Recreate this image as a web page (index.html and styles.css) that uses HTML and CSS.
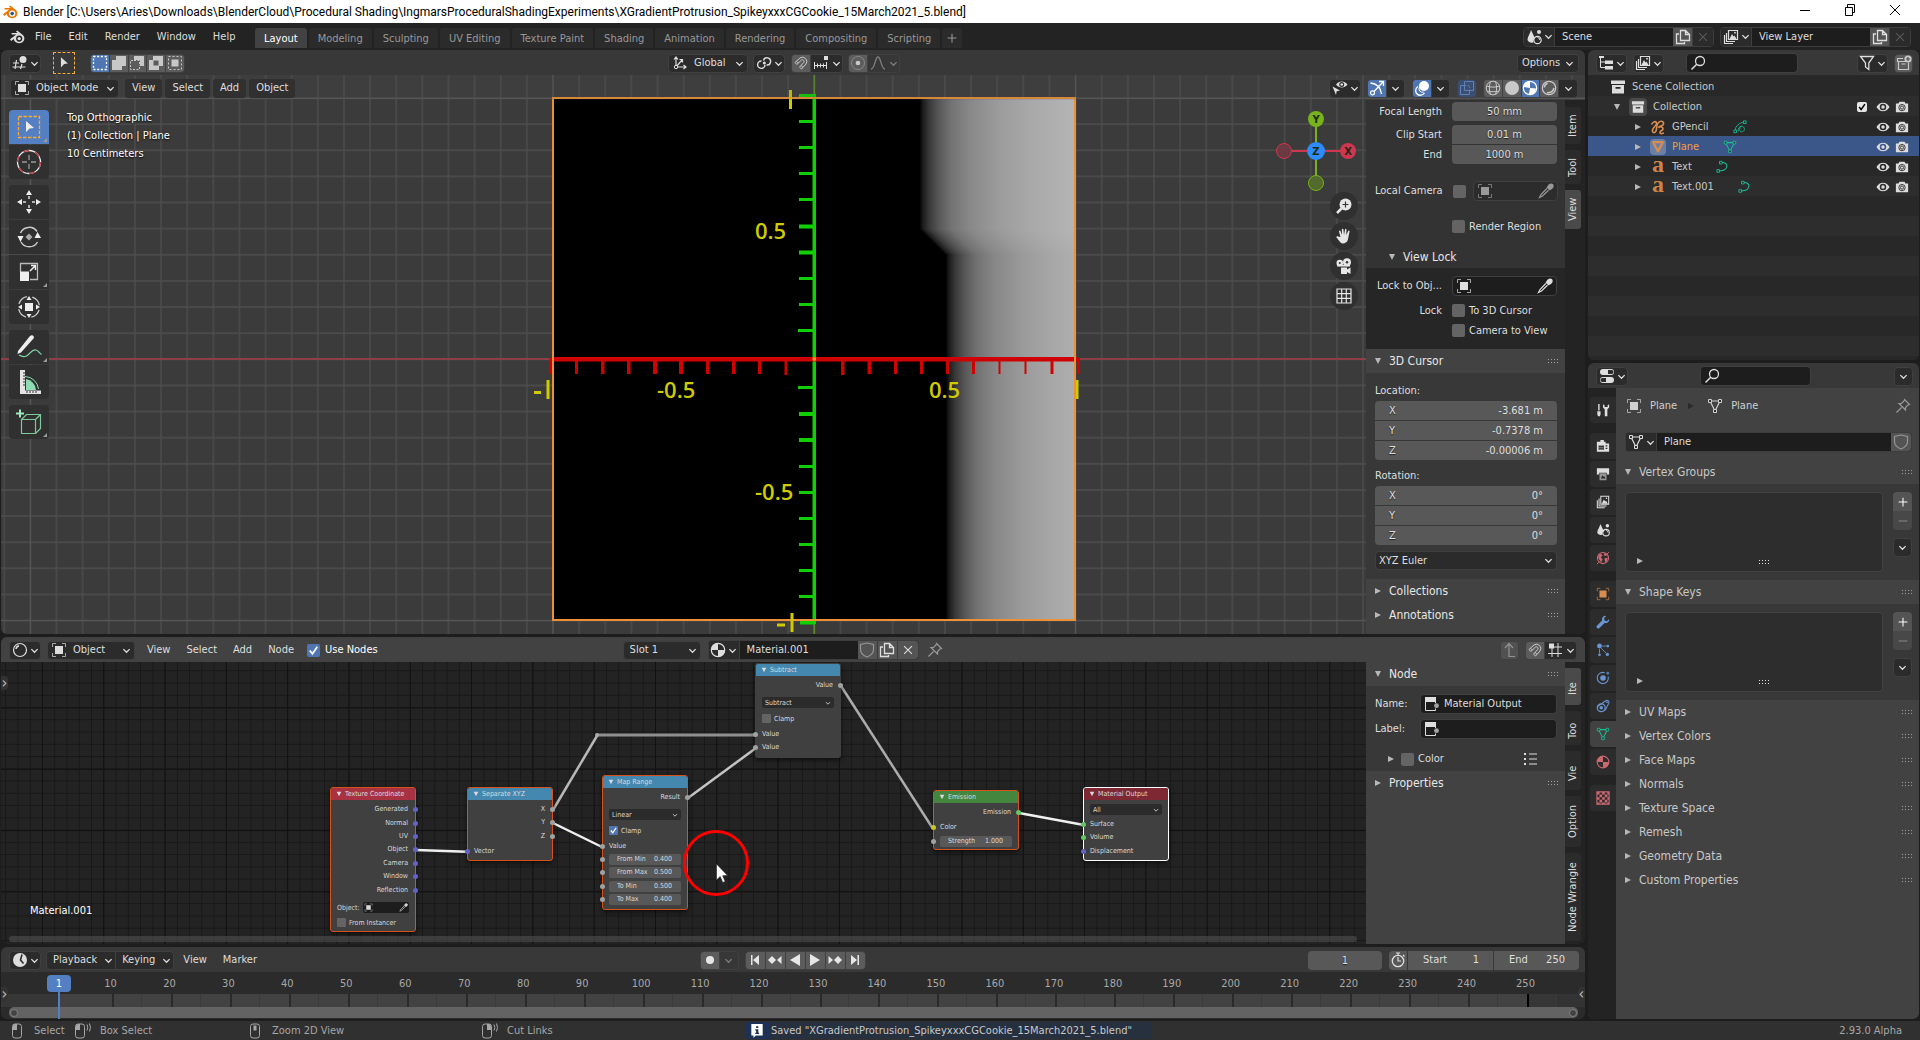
FILE: index.html
```html
<!DOCTYPE html>
<html lang="en">
<head>
<meta charset="utf-8">
<title>Blender</title>
<link rel="stylesheet" href="styles.css">
</head>
<body>
<svg class="defs" aria-hidden="true">
  <defs>
    <symbol id="chev" viewBox="0 0 10 10"><path d="M1.500 3.500 5 7l3.500-3.500" fill="none" stroke="currentColor" stroke-width="1.400"/></symbol>
    <symbol id="logo" viewBox="0 0 16 16"><path d="M1 10.200 7.300 5.400H2.600V3.900h6L7 2.600l1.200-1.100 5 4.100C15 7 15.600 8.600 15.300 10.200 14.800 12.700 12.600 14.300 10 14.300c-2.800 0-5-1.900-5.200-4.200l-2.700 2z" fill="currentColor"/><circle cx="10.200" cy="9.600" r="3.100" fill="#232323"/><circle cx="10.200" cy="9.600" r="1.700" fill="currentColor"/></symbol>
    <symbol id="grid3d" viewBox="0 0 16 16"><path d="M4.500 5 3 14M10 9l-1.500 5M1 8h6M.5 12h13" stroke="currentColor" fill="none" stroke-width="1.200"/><circle cx="11" cy="4.500" r="3.500" fill="currentColor"/></symbol>
    <symbol id="arrow" viewBox="0 0 16 16"><path d="m4.500 1.500 8 7.200-4.400.3L4.500 13z" fill="currentColor"/></symbol>
    <symbol id="objmode" viewBox="0 0 16 16"><rect x="4" y="4" width="8" height="8" fill="currentColor"/><path d="M1.500 5V1.500H5M11 1.500h3.500V5M14.500 11v3.500H11M5 14.500H1.500V11" fill="none" stroke="currentColor" opacity=".7"/></symbol>
    <symbol id="s1" viewBox="0 0 16 16"><rect x="1.500" y="1.500" width="13" height="13" fill="none" stroke="currentColor" stroke-width="1.300" stroke-dasharray="2 1.700"/></symbol>
    <symbol id="s2" viewBox="0 0 16 16"><path d="M5 1h10v10h-4v4H1V5h4z" fill="currentColor"/></symbol>
    <symbol id="s3" viewBox="0 0 16 16"><path d="M5 1h10v10h-4V5H5z" fill="currentColor"/><path d="M4 5.500H1.500v9h9V12M5 5.500h5.500V11" fill="none" stroke="currentColor" stroke-dasharray="2 1.500"/></symbol>
    <symbol id="s4" viewBox="0 0 16 16"><path d="M5 1h10v10h-4v4H1V5h4zM5.500 5.500v5h5v-5z" fill="currentColor" fill-rule="evenodd"/></symbol>
    <symbol id="s5" viewBox="0 0 16 16"><rect x="4.500" y="4.500" width="7" height="7" fill="currentColor"/><rect x="1.500" y="1.500" width="13" height="13" fill="none" stroke="currentColor" stroke-dasharray="2 2"/></symbol>
    <symbol id="axes" viewBox="0 0 16 16"><path d="M4 3v9h9M4 12l6-7M2 4.500 4 2l2 2.500M11.500 10l2.500 2-2.500 2M7.500 4.500h3v3" fill="none" stroke="currentColor" stroke-width="1.200"/><circle cx="4" cy="12" r="1.700" fill="#2b2b2b" stroke="currentColor"/></symbol>
    <symbol id="pivot" viewBox="0 0 16 16"><path d="M7.500 5.500a3.600 3.600 0 1 1 3 4.500M9 10a3.700 3.700 0 1 1-3.500-4" fill="none" stroke="currentColor" stroke-width="1.400"/><circle cx="8.300" cy="8" r="1.500" fill="currentColor"/></symbol>
    <symbol id="magnet" viewBox="0 0 16 16"><path d="M2 7.500 7 3a4.300 4.300 0 0 1 6 6l-4.500 5-2-1.800 4.300-4.800a1.700 1.700 0 0 0-2.400-2.300L3.800 9.500zM3.500 6.200l1.900 1.900M8 10.500l2 1.800" fill="none" stroke="currentColor"/></symbol>
    <symbol id="snapinc" viewBox="0 0 16 16"><path d="M1.500 7v7M4.500 8.500v4M7.500 8.500v4M10.500 8.500v4M13.500 7v7M1 10.500h13" fill="none" stroke="currentColor"/><rect x="11" y="1" width="4" height="4" fill="currentColor"/></symbol>
    <symbol id="prop" viewBox="0 0 16 16"><circle cx="8" cy="8" r="6.500" fill="none" stroke="currentColor" opacity=".4"/><circle cx="8" cy="8" r="2.300" fill="currentColor"/></symbol>
    <symbol id="falloff" viewBox="0 0 16 16"><path d="M1 14c4 0 4-12 7-12s3 12 7 12" fill="none" stroke="currentColor" stroke-width="1.300"/></symbol>
    <symbol id="cam" viewBox="0 0 16 16"><path d="M5 2h6l1 2h3v10H1V4h3z" fill="currentColor"/><circle cx="8" cy="8.700" r="3.600" fill="none" stroke="#282828"/><circle cx="8" cy="8.700" r="1.800" fill="none" stroke="#282828"/></symbol>
    <symbol id="eye" viewBox="0 0 16 16"><path d="M.5 8C4 1.500 12 1.500 15.500 8 12 14.500 4 14.500.5 8zM8 4.300a3.700 3.700 0 1 0 0 7.400 3.700 3.700 0 0 0 0-7.400z" fill="currentColor" fill-rule="evenodd"/><circle cx="8" cy="8" r="2" fill="currentColor"/></symbol>
    <symbol id="vis" viewBox="0 0 16 16"><path d="M4 4.500c3-4 8.500-4 11.500 0-3 4-8.500 4-11.500 0zM9.700 2a2.500 2.500 0 1 0 0 5 2.500 2.500 0 0 0 0-5z" fill="currentColor" fill-rule="evenodd"/><circle cx="9.700" cy="4.500" r="1.300" fill="currentColor"/><path d="m.5 6.500 7.500 4-3.300.8L4 15z" fill="currentColor"/></symbol>
    <symbol id="gizmo" viewBox="0 0 16 16"><path d="M1.500 3c6 .5 10 4.500 11 11M4.500 12 14 2M10 1.500h4.500V6" fill="none" stroke="currentColor" stroke-width="1.300"/><circle cx="3.500" cy="12.800" r="2" fill="#4f76b3" stroke="currentColor" stroke-width="1.200"/></symbol>
    <symbol id="overlay" viewBox="0 0 16 16"><circle cx="10" cy="6" r="5" fill="currentColor"/><path d="M4 6.500a4.700 4.700 0 1 0 6.500 6.300" fill="none" stroke="currentColor" stroke-width="1.300"/><path d="M5.500 7a3.400 3.400 0 0 0 4 5" fill="none" stroke="currentColor"/></symbol>
    <symbol id="xray" viewBox="0 0 16 16"><path d="M5.500 1.500h9v9h-9zM5 5.500H1.500v9h9V11" fill="none" stroke="currentColor"/><path d="M5.500 5.500h5v5" fill="none" stroke="currentColor" stroke-dasharray="1.500 1.500"/></symbol>
    <symbol id="wire" viewBox="0 0 16 16"><circle cx="8" cy="8" r="6.800" fill="none" stroke="currentColor"/><path d="M1.500 6c4 1.500 9 1.500 13 0M2 11c4 1 8 1 12 0M5.500 1.500c-1.500 4-1.500 9 0 13M10.500 1.500c1.500 4 1.500 9 0 13" fill="none" stroke="currentColor"/></symbol>
    <symbol id="solid" viewBox="0 0 16 16"><circle cx="8" cy="8" r="7" fill="currentColor"/></symbol>
    <symbol id="matprev" viewBox="0 0 16 16"><circle cx="8" cy="8" r="6.700" fill="none" stroke="currentColor" stroke-width="1.200"/><path d="M8 1.500V8l6 .5C13.500 13 10 15 7 14l1-6-6.500-1C2 3 5 1.300 8 1.500z" fill="currentColor"/></symbol>
    <symbol id="matball" viewBox="0 0 16 16"><circle cx="8" cy="8" r="6.700" fill="none" stroke="currentColor" stroke-width="1.200"/><path d="M8 1.300V8h6.700A6.700 6.700 0 0 1 8 14.700V8H1.300A6.700 6.700 0 0 1 8 1.300z" fill="currentColor"/></symbol>
    <symbol id="render" viewBox="0 0 16 16"><circle cx="8" cy="8" r="6.700" fill="none" stroke="currentColor" stroke-width="1.200"/><path d="M3.300 7.500A5 5 0 0 1 6.500 3.200M13 8c-1 3.500-4 5-7 4.800" fill="none" stroke="currentColor" stroke-width="1.500"/></symbol>
    <symbol id="shaderball" viewBox="0 0 16 16"><circle cx="8" cy="8" r="6.500" fill="none" stroke="currentColor" stroke-width="1.200"/><path d="M4 7a4 4 0 0 1 3-3.300" fill="none" stroke="currentColor" stroke-width="1.500"/></symbol>
    <symbol id="dropper" viewBox="0 0 16 16"><path d="m9 4 3 3M10 3.500c1-2 3.500-3 4.500-1.700S14.500 5.200 12.500 6z" fill="currentColor" stroke="currentColor" stroke-width="1.500"/><path d="M8.800 5.500 3 11.500 1.500 14.500l3-1.500 6-5.800" fill="none" stroke="currentColor" stroke-width="1.200"/></symbol>
    <symbol id="scene" viewBox="0 0 16 16"><path d="m5 1 4 8.500c-1.500.5-2 2-1.500 4-3 .5-6-.5-6-3C1.500 8 4 5 5 1z" fill="currentColor"/><circle cx="13" cy="3" r="2" fill="currentColor"/><circle cx="11.500" cy="11" r="3.700" fill="none" stroke="currentColor" stroke-width="1.200"/><path d="M11.500 8.500a2.500 2.500 0 0 1 2.300 2.500" fill="none" stroke="currentColor"/></symbol>
    <symbol id="vlayer" viewBox="0 0 16 16"><path d="M5.500 1.500h9v9h-9zM3.500 4v8.500H12M1.500 6v8.500H10" fill="none" stroke="currentColor" stroke-width="1.200"/><path d="m6.500 10 2.500-5 1.500 2.500 1-1L13.500 10z" fill="currentColor"/><circle cx="12" cy="3.700" r=".9" fill="currentColor"/></symbol>
    <symbol id="copy" viewBox="0 0 16 16"><path d="M5.500 1.500h5l4 4v6h-9zM10.500 1.500v4h4M4 5H1.500v9.500h8V13" fill="none" stroke="currentColor" stroke-width="1.300"/></symbol>
    <symbol id="cross" viewBox="0 0 16 16"><path d="m3.500 3.500 9 9M12.500 3.500l-9 9" stroke="currentColor" stroke-width="1.200"/></symbol>
    <symbol id="tree" viewBox="0 0 16 16"><path d="M2.500 2v10.500H8M2.500 7H8" fill="none" stroke="currentColor"/><path d="M1 1h5v2H1zM7 5.500h8v3.500H7zM7 11h8v3.500H7z" fill="currentColor"/></symbol>
    <symbol id="search" viewBox="0 0 16 16"><circle cx="10" cy="6" r="4.500" fill="none" stroke="currentColor" stroke-width="1.300"/><path d="M6.700 9.300 1.500 14.500" stroke="currentColor" stroke-width="1.500"/></symbol>
    <symbol id="funnel" viewBox="0 0 16 16"><path d="M1.500 1.500h13L9.800 8v6.500L6.500 12V8z" fill="none" stroke="currentColor" stroke-width="1.300"/></symbol>
    <symbol id="newcol" viewBox="0 0 16 16"><path d="M7 3.500H1.500v3H12M2.500 6.500v8h10v-7M5.500 9h4" fill="none" stroke="currentColor" stroke-width="1.200"/><circle cx="12" cy="4" r="3.600" fill="currentColor"/><path d="M12 2v4M10 4h4" stroke="#444"/></symbol>
    <symbol id="box" viewBox="0 0 16 16"><path d="M1 1.500h14V5H1zM2 6h12v8.500H2zM5.500 8v1.800h5V8z" fill="currentColor" fill-rule="evenodd"/></symbol>
    <symbol id="gp" viewBox="0 0 16 16"><path d="M1.500 5.500C3 2.500 6 1.500 6.500 4S3 8 2.500 11s2.500 3.500 3.500 1 0-6 2.500-8.500S14 2.500 13.500 5 9.500 6.500 8.500 8.500c2-1.500 5-.5 4.500 1.500s-3 1.500-3 3.500 2.500 1 4 .5" fill="none" stroke="currentColor" stroke-width="1.600"/></symbol>
    <symbol id="gpd" viewBox="0 0 16 16"><path d="M2.500 12c0-5 5-9 10-9.500M6 13c-1-5 4-7 6-5s1 5-2 5.500-3-4-1-7" fill="none" stroke="currentColor"/><path d="M12 1h3v3h-3zM1 11.500h3v3H1z" fill="#282828" stroke="currentColor"/></symbol>
    <symbol id="mesh" viewBox="0 0 16 16"><path d="M3 3h10L8 13z" fill="none" stroke="currentColor" stroke-width="1.200"/><path d="M1.500 1.500h3v3h-3zM11.500 1.500h3v3h-3zM6.500 11.500h3v3h-3z" fill="#303030" stroke="currentColor"/></symbol>
    <symbol id="meshobj" viewBox="0 0 16 16"><path d="M2.500 2.500h11L8 13z" fill="none" stroke="currentColor" stroke-width="2.500" stroke-linejoin="round"/></symbol>
    <symbol id="curve" viewBox="0 0 16 16"><path d="M6 3c9-1 9 9-2 9.500" fill="none" stroke="currentColor" stroke-width="1.200"/><path d="M4 1.500h3v3H4zM1 11h3v3H1z" fill="#282828" stroke="currentColor"/></symbol>
    <symbol id="switches" viewBox="0 0 16 16"><rect x="1" y="1" width="14" height="6" rx="3" fill="currentColor"/><rect x="1" y="9" width="14" height="6" rx="3" fill="currentColor"/><path d="M9 2h3.500a2 2 0 0 1 0 4H9z" fill="#2b2b2b"/><path d="M7 10H3.500a2 2 0 0 0 0 4H7z" fill="#2b2b2b"/></symbol>
    <symbol id="tools" viewBox="0 0 16 16"><path d="M2.500 1h1.600v7.500H2.500zM1.500 9.500h3.700v3.500l-.9 2H2.400l-.9-2z" fill="currentColor"/><path d="M8 1.500v3.700l2 2V15h3V7.200l2-2V1.500l-1.700 1v2.200h-3.500V2.500z" fill="currentColor"/></symbol>
    <symbol id="rendercam" viewBox="0 0 16 16"><path d="M5 1h4v2h2v2h4v9.500H1V3h4zM3 7v5.500h6V7zM11 7v1.500h2V7zM11 10v1.500h2V10z" fill="currentColor" fill-rule="evenodd"/><path d="M3.500 7.500h5M3.500 10h5M3.500 12.200h5" stroke="currentColor" opacity=".6"/></symbol>
    <symbol id="printer" viewBox="0 0 16 16"><path d="M1 1.500h14v5H1zM1 6.500h2.500v2H1zM12.500 6.500H15v2h-2.500z" fill="currentColor"/><path d="M4 7h8v8H4z" fill="currentColor" opacity=".6"/><path d="m5.500 13 2-3.500 1.500 2 .8-.8 1 2.300z" fill="#282828"/></symbol>
    <symbol id="world" viewBox="0 0 16 16"><circle cx="8" cy="8" r="6.400" fill="none" stroke="currentColor" stroke-width="1.200"/><path d="M3 4.500 6 3l1.500 2-2 2 2 2.500L6 13 2.500 8zM9.500 8.500l4-1-1 4-2 1.500zM9 2.500 13 4l-1.500 1.800L9 5z" fill="currentColor"/><path d="m12.500 3.500 2.500-2.500M1 15l2.500-2.500" stroke="currentColor"/></symbol>
    <symbol id="wrench" viewBox="0 0 16 16"><path d="M11 1a4 4 0 0 0-4 5.200L1.200 12a1.900 1.900 0 0 0 2.800 2.800L9.800 9A4 4 0 0 0 15 4.500L12.500 7 9.800 6.200 9.300 3.500 11.800 1z" fill="currentColor"/></symbol>
    <symbol id="particles" viewBox="0 0 16 16"><circle cx="4" cy="3.500" r="2.800" fill="currentColor"/><circle cx="13.500" cy="3.500" r="1.500" fill="currentColor"/><circle cx="4" cy="13.500" r="1.500" fill="currentColor"/><circle cx="13" cy="13" r="1.800" fill="currentColor"/><path d="M7 3.500h5M4 7v5M6 6l6 6" stroke="currentColor"/></symbol>
    <symbol id="physics" viewBox="0 0 16 16"><circle cx="8" cy="8" r="3.200" fill="currentColor"/><path d="M10 2A6.400 6.400 0 1 0 14 6.500" fill="none" stroke="currentColor" stroke-width="1.200"/><circle cx="13.500" cy="2.500" r="1.700" fill="currentColor" opacity=".7"/></symbol>
    <symbol id="constraint" viewBox="0 0 16 16"><path d="M1.500 9 11 2c2.500-1.500 4.500 1 3.500 3l-4 8" fill="none" stroke="currentColor" stroke-width="1.200"/><circle cx="6" cy="10" r="4.500" fill="none" stroke="currentColor" stroke-width="1.500"/><circle cx="6" cy="10" r="2" fill="currentColor"/><circle cx="12.500" cy="3.700" r="1" fill="currentColor"/></symbol>
    <symbol id="texture" viewBox="0 0 16 16"><path d="M1 1h14v14H1z" fill="none" stroke="currentColor" stroke-width="1.200"/><path d="M1 1h3v3H1zM7 1h3v3H7zM13 1h2v3h-2zM4 4h3v3H4zM10 4h3v3h-3zM1 7h3v3H1zM7 7h3v3H7zM13 7h2v3h-2zM4 10h3v3H4zM10 10h3v3h-3zM1 13h3v2H1zM7 13h3v2H7zM13 13h2v2h-2z" fill="currentColor"/></symbol>
    <symbol id="pin" viewBox="0 0 16 16"><path d="m9.500 1.500 5 5-1.500.5-2.500 2.500V12L4 5.500h2.500L9 3zM6.500 9.500l-5 5" fill="none" stroke="currentColor" stroke-width="1.200"/></symbol>
    <symbol id="shield" viewBox="0 0 16 16"><path d="M8 1 14.500 2.500v5C14.500 11 12 13.500 8 15c-4-1.500-6.500-4-6.500-7.500v-5z" fill="none" stroke="currentColor" stroke-width="1.200"/></symbol>
    <symbol id="plus" viewBox="0 0 16 16"><path d="M8 3v10M3 8h10" stroke="currentColor" stroke-width="1.200"/></symbol>
    <symbol id="minus" viewBox="0 0 16 16"><path d="M3 8h10" stroke="currentColor" stroke-width="1.200"/></symbol>
    <symbol id="grip" viewBox="0 0 12 6"><path d="M1 1.500h11M1 4.500h11" stroke="currentColor" stroke-width="1" stroke-dasharray="1 2"/></symbol>
    <symbol id="down" viewBox="0 0 8 8"><path d="M1 1h6L4 7z" fill="currentColor"/></symbol>
    <symbol id="right" viewBox="0 0 8 8"><path d="M1 1v6l6-3z" fill="currentColor"/></symbol>
    <symbol id="nodeico" viewBox="0 0 16 16"><path d="M1 1h11v5H1z" fill="currentColor"/><path d="M1.500 5v9.500h10V12.500M11.500 5v2" fill="none" stroke="currentColor"/><circle cx="12.500" cy="9.700" r="2.400" fill="currentColor" opacity=".7"/></symbol>
    <symbol id="list" viewBox="0 0 16 16"><path d="M7 3h8M7 8h8M7 13h8" stroke="currentColor" stroke-width="1.200"/><path d="M2 2h2v2H2zM2 7h2v2H2zM2 12h2v2H2z" fill="currentColor"/></symbol>
    <symbol id="parent" viewBox="0 0 16 16"><path d="M3 6l4-4.500L11 6M7 2v12.500h6" fill="none" stroke="currentColor" stroke-width="1.200"/></symbol>
    <symbol id="snapgrid" viewBox="0 0 16 16"><path d="M5 6v9M11 1v14M1 11.500h14M7 5h8" fill="none" stroke="currentColor"/><path d="M2 1.500h5v5H2z" fill="currentColor"/></symbol>
    <symbol id="clock" viewBox="0 0 16 16"><circle cx="8" cy="8" r="7" fill="currentColor"/><path d="M10 2.500 8.500 8l3 3.500" fill="none" stroke="#2b2b2b" stroke-width="1.600"/></symbol>
    <symbol id="stop" viewBox="0 0 16 16"><circle cx="8" cy="9" r="5.700" fill="none" stroke="currentColor" stroke-width="1.300"/><path d="M8 5v4h3M6 1h4M8 1v2.500M13 3l1.500 1.500" fill="none" stroke="currentColor" stroke-width="1.200"/></symbol>
    <symbol id="rec" viewBox="0 0 16 16"><circle cx="8" cy="8" r="4" fill="currentColor"/></symbol>
    <symbol id="first" viewBox="0 0 16 16"><path d="M4 3h1.500v10H4zM12 3v10L6 8z" fill="currentColor"/></symbol>
    <symbol id="prevk" viewBox="0 0 16 16"><path d="M5 4l4 4-4 4-4-4zM14.500 4v8L10 8z" fill="currentColor"/></symbol>
    <symbol id="prev" viewBox="0 0 16 16"><path d="M13 2v12L3 8z" fill="currentColor"/></symbol>
    <symbol id="play" viewBox="0 0 16 16"><path d="M3 2v12l10-6z" fill="currentColor"/></symbol>
    <symbol id="nextk" viewBox="0 0 16 16"><path d="M11 4l4 4-4 4-4-4zM1.500 4v8L6 8z" fill="currentColor"/></symbol>
    <symbol id="last" viewBox="0 0 16 16"><path d="M10.500 3H12v10h-1.500zM4 3v10l6-5z" fill="currentColor"/></symbol>
    <symbol id="mouseL" viewBox="0 0 16 16"><rect x="3.500" y="1" width="9" height="14" rx="2.500" fill="none" stroke="currentColor"/><path d="M4 3q0-2 2.500-2H8v6H4z" fill="currentColor"/></symbol>
    <symbol id="mouseLd" viewBox="0 0 16 16"><rect x=".5" y="1" width="9" height="14" rx="2.500" fill="none" stroke="currentColor"/><path d="M1 3q0-2 2.500-2H5v6H1z" fill="currentColor"/><path d="M12 1.500q1.500 3 0 6M14.500.5q2 4 0 8" fill="none" stroke="currentColor"/></symbol>
    <symbol id="mouseRd" viewBox="0 0 16 16"><rect x=".5" y="1" width="9" height="14" rx="2.500" fill="none" stroke="currentColor"/><path d="M9 3q0-2-2.500-2H5v6h4z" fill="currentColor"/><path d="M12 1.500q1.500 3 0 6M14.500.5q2 4 0 8" fill="none" stroke="currentColor"/></symbol>
    <symbol id="mouseM" viewBox="0 0 16 16"><rect x="3.500" y="1" width="9" height="14" rx="2.500" fill="none" stroke="currentColor"/><rect x="6.500" y="2.500" width="3" height="5" fill="currentColor"/></symbol>
    <symbol id="info" viewBox="0 0 16 16"><path d="M1.500 0h13v13h-8L4 16v-3H1.500z" fill="#fff"/><path d="M7 2.500h2.500v2H7zM6 6h3.500v4h1v1.500H6V10h1V7.500H6z" fill="#1c3155"/></symbol>
    <symbol id="t-box" viewBox="0 0 32 32"><rect x="5.500" y="5.500" width="21" height="21" fill="none" stroke="#f5ab35" stroke-width="1.300" stroke-dasharray="3.500 1.500"/><path d="m13 10 8 7-4.500.5L13 21z" fill="#eee"/></symbol>
    <symbol id="t-cursor" viewBox="0 0 32 32"><circle cx="16" cy="16" r="11.500" fill="none" stroke="#eee" stroke-width="1.300"/><circle cx="16" cy="16" r="11.500" fill="none" stroke="#c04048" stroke-width="1.300" stroke-dasharray="6 6"/><path d="M16 9v5M16 18v5M9 16h5M18 16h5" stroke="#999" stroke-width="1.300"/></symbol>
    <symbol id="t-move" viewBox="0 0 32 32"><path d="m16 4 3 5h-6zM16 28l3-5h-6zM4 16l5-3v6zM28 16l-5-3v6z" fill="#eee"/><path d="M16 10v3M16 19v3M10 16h3M19 16h3" stroke="#ddd" stroke-width="1.500"/></symbol>
    <symbol id="t-rotate" viewBox="0 0 32 32"><path d="M7.500 12a9.500 9.500 0 0 1 16.500-1.500M8 21a9.500 9.500 0 0 0 16.500 0" fill="none" stroke="#ccc" stroke-width="1.500"/><path d="M4.500 15h6L7.500 21zM21.500 17h6.500L24.500 11z" fill="#eee"/><path d="m16 12.500 3.500 3.500-3.500 3.500-3.500-3.500z" fill="#aaa"/></symbol>
    <symbol id="t-scale" viewBox="0 0 32 32"><path d="M7.500 16V7.500h17v16H17" fill="none" stroke="#bbb" stroke-width="1.300"/><path d="M7 15.500h9V25H7z" fill="#eee"/><path d="m17 15 5-5M18 9.500h4.500V14" fill="none" stroke="#eee" stroke-width="1.500"/></symbol>
    <symbol id="t-transform" viewBox="0 0 32 32"><circle cx="16" cy="16" r="10.500" fill="none" stroke="#ccc" stroke-width="1.300" stroke-dasharray="11 5.500" stroke-dashoffset="-3"/><path d="M12 12h8v8h-8zM16 5l2.500 4h-5zM16 27l2.500-4h-5zM5 16l4-2.500v5zM27 16l-4-2.500v5z" fill="#eee"/></symbol>
    <symbol id="t-annot" viewBox="0 0 32 32"><path d="M5 20 17 5c2-2 5 0 3.500 2.500L8 21.500 4.500 23z" fill="#eee"/><path d="M6 24c10 6 11-7 17-5 3 1 3 3 5.500 4.500" fill="none" stroke="#7ed6a6" stroke-width="1.300"/></symbol>
    <symbol id="t-measure" viewBox="0 0 32 32"><path d="M13 13a12 12 0 0 1 10 11H13z" fill="#8edcb0"/><path d="M12 10.500A14 14 0 0 1 25.500 23" fill="none" stroke="#8edcb0"/><path d="M7 4h5v20.500h16V28H7z" fill="#e4e4e4"/><path d="M10 7h2M10 10h2M10 13h2M10 16h2M10 19h2M14 25v2M17 25v2M20 25v2M23 25v2" stroke="#333"/></symbol>
    <symbol id="t-cube" viewBox="0 0 32 32"><path d="M8.500 13.500h14v14h-14zM8.500 13.500l5-5h14v14l-5 5M22.500 13.500l5-5" fill="none" stroke="#7ec99c" stroke-width="1.200"/><path d="M7 3.500v8M3 7.500h8" stroke="#9ee6bb" stroke-width="2"/></symbol>
    <symbol id="zoomin" viewBox="0 0 16 16"><circle cx="9.500" cy="6.500" r="6" fill="currentColor"/><path d="m5.500 10.500-4.500 4.500" stroke="currentColor" stroke-width="2.500"/><path d="M9.500 3.500v6M6.500 6.500h6" stroke="#333" stroke-width="1.200"/></symbol>
    <symbol id="hand" viewBox="0 0 16 16"><path d="M4.500 9 3 3.500c-.2-1 1-1.500 1.500-.5L6 7 5.800 1.500c0-1 1.500-1.200 1.600-.2L8 7l1-5.500c.2-1 1.600-.8 1.500.3L10.200 7l2-4c.5-.9 1.700-.3 1.300.7L11.800 12c-1 3-5 4.500-7.300 2.500L.5 9.500C0 8.500 1 7.800 2 8.500z" fill="currentColor"/></symbol>
    <symbol id="cine" viewBox="0 0 16 16"><circle cx="3.800" cy="5" r="3.300" fill="currentColor"/><circle cx="11" cy="4.200" r="4" fill="currentColor"/><path d="M1 7h13v1.500H1zM5 9.500h6v2l3.500-2V16L11 14v2H5z" fill="currentColor"/><circle cx="3.800" cy="5" r="1" fill="#333"/><circle cx="11" cy="4.200" r="1.200" fill="#333"/></symbol>
    <symbol id="ortho" viewBox="0 0 16 16"><path d="M1 1h14v14H1zM5.700 1v14M10.300 1v14M1 5.700h14M1 10.300h14" fill="none" stroke="currentColor" stroke-width="1.200"/></symbol>
  </defs>
</svg>

<div class="app">
  <header class="titlebar">
    <svg class="i16 title-logo" viewBox="0 0 16 16"><path d="M1 10.200 7.300 5.400H2.600V3.900h6L7 2.600l1.200-1.100 5 4.100C15 7 15.600 8.600 15.300 10.200 14.800 12.700 12.600 14.300 10 14.300c-2.800 0-5-1.900-5.200-4.200l-2.700 2z" fill="#ea7600"/><circle cx="10.200" cy="9.600" r="3.100" fill="#fff"/><circle cx="10.200" cy="9.600" r="1.800" fill="#265787"/></svg>
    <span class="title-text">Blender [C:\Users\Aries\Downloads\BlenderCloud\Procedural Shading\IngmarsProceduralShadingExperiments\XGradientProtrusion_SpikeyxxxCGCookie_15March2021_5.blend]</span>
    <div class="winctl">
      <button aria-label="Minimize"><svg class="i12" viewBox="0 0 12 12"><path d="M1 6.500h10" stroke="#000"/></svg></button>
      <button aria-label="Restore"><svg class="i12" viewBox="0 0 12 12"><path d="M1.500 3.500h7v8h-7zM3.500 3V.5h7v8H9" fill="none" stroke="#000"/></svg></button>
      <button aria-label="Close"><svg class="i12" viewBox="0 0 12 12"><path d="m1 1 10 10M11 1 1 11" stroke="#000"/></svg></button>
    </div>
  </header>

  <nav class="topbar">
    <svg class="i16 applogo"><use href="#logo"/></svg>
    <div class="menus"><button>File</button><button>Edit</button><button>Render</button><button>Window</button><button>Help</button></div>
    <div class="wtabs">
      <button class="on">Layout</button><button>Modeling</button><button>Sculpting</button><button>UV Editing</button><button>Texture Paint</button><button>Shading</button><button>Animation</button><button>Rendering</button><button>Compositing</button><button>Scripting</button><button class="add" aria-label="Add workspace"><svg class="i14"><use href="#plus"/></svg></button>
    </div>
    <div class="idblock top-id">
      <button class="idtype" aria-label="Scene menu"><svg class="i16"><use href="#scene"/></svg><svg class="chev"><use href="#chev"/></svg></button>
      <input aria-label="Scene" value="Scene">
      <button class="lite" aria-label="New scene"><svg class="i16"><use href="#copy"/></svg></button>
      <button class="off" aria-label="Delete scene"><svg class="i14"><use href="#cross"/></svg></button>
    </div>
    <div class="idblock top-id">
      <button class="idtype" aria-label="View layer menu"><svg class="i16"><use href="#vlayer"/></svg><svg class="chev"><use href="#chev"/></svg></button>
      <input aria-label="View layer" value="View Layer">
      <button class="lite" aria-label="New layer"><svg class="i16"><use href="#copy"/></svg></button>
      <button class="off" aria-label="Delete layer"><svg class="i14"><use href="#cross"/></svg></button>
    </div>
  </nav>

  <main class="work">
    <div class="leftcol">
      <section class="editor viewport">
        <div class="hdr">
          <button class="edbtn" aria-label="Editor type"><svg class="i16"><use href="#grid3d"/></svg><svg class="chev"><use href="#chev"/></svg></button>
          <button class="toolpick" aria-label="Select box tool"><svg class="i14"><use href="#arrow"/></svg></button>
          <div class="seg selmodes"><button class="on" aria-label="Set"><svg class="i16"><use href="#s1"/></svg></button><button aria-label="Extend"><svg class="i16"><use href="#s2"/></svg></button><button aria-label="Subtract"><svg class="i16"><use href="#s3"/></svg></button><button aria-label="Difference"><svg class="i16"><use href="#s4"/></svg></button><button aria-label="Intersect"><svg class="i16"><use href="#s5"/></svg></button></div>
          <i class="sp sp-a"></i>
          <div class="dd w80"><svg class="i16"><use href="#axes"/></svg><select aria-label="Orientation"><option>Global</option></select><svg class="chev"><use href="#chev"/></svg></div>
          <button class="edbtn pivot" aria-label="Pivot"><svg class="i16"><use href="#pivot"/></svg><svg class="chev"><use href="#chev"/></svg></button>
          <div class="seg snap"><button aria-label="Snap"><svg class="i16"><use href="#magnet"/></svg></button><button class="dark" aria-label="Snap to"><svg class="i16"><use href="#snapinc"/></svg><svg class="chev"><use href="#chev"/></svg></button></div>
          <div class="seg snap"><button aria-label="Proportional"><svg class="i16"><use href="#prop"/></svg></button><button class="dark dim" aria-label="Falloff"><svg class="i16"><use href="#falloff"/></svg><svg class="chev"><use href="#chev"/></svg></button></div>
          <i class="sp sp-b"></i>
          <button class="btn opts">Options <svg class="chev"><use href="#chev"/></svg></button>
        </div>
        <div class="stage">
          <svg class="scene" viewBox="1 75 1584 559" preserveAspectRatio="xMidYMid slice">
            <defs>
              <pattern id="minor" x="814.300" y="359.300" width="26.130" height="26.130" patternUnits="userSpaceOnUse"><path d="M0 0h26.130M0 0v26.130M26.130 0v26.130M0 26.130h26.130" stroke="#4e4e4e" stroke-width="1.300"/></pattern>
              <linearGradient id="ramp" gradientUnits="userSpaceOnUse" x1="919.600" y1="0" x2="1075.600" y2="0">
                <stop offset="0" stop-color="#000"/><stop offset=".02" stop-color="#1a1a1a"/><stop offset=".06" stop-color="#383838"/><stop offset=".12" stop-color="#565656"/><stop offset=".2" stop-color="#727272"/><stop offset=".32" stop-color="#888"/><stop offset=".5" stop-color="#9b9b9b"/><stop offset=".7" stop-color="#a8a8a8"/><stop offset=".83" stop-color="#aeaeae"/><stop offset="1" stop-color="#b5b5b5"/>
              </linearGradient>
              <linearGradient id="rampLow" href="#ramp" gradientTransform="translate(26.100 0)"/>
              <linearGradient id="rampMid" href="#ramp" x1="919.600" y1="229" x2="997.600" y2="151"/>
            </defs>
            <rect x="1" y="75" width="1584" height="559" fill="#3b3b3b"/>
            <rect x="1" y="75" width="1584" height="559" fill="url(#minor)"/>
            <path d="M30.500 75v559M553 75v559M1075.500 75v559M1 98.500h1584M1 620.500h1584" stroke="#555"/>
            <path d="M1 359h1584" stroke="#8c3f48" stroke-width="2"/>
            <path d="M814.300 75v559" stroke="#5d8a2a" stroke-width="1.600"/>
            <rect x="553" y="98" width="522.500" height="522" fill="#000"/>
            <rect x="919" y="98" width="156.500" height="131.500" fill="url(#ramp)"/>
            <path d="M919.600 229h156v25.500h-130z" fill="url(#rampMid)"/>
            <rect x="945" y="254" width="130.500" height="366" fill="url(#rampLow)"/>
            <g fill="#10d005"><rect x="812.500" y="94" width="3.500" height="530"/><path d="M799 94h15v4h-15zM799 120h15v3h-15zM799 146h15v3h-15zM799 172h15v3h-15zM799 198h15v3h-15zM799 224.500h15v4h-15zM799 250.500h15v4h-15zM799 277h15v3h-15zM799 303h15v3h-15zM798 329h15v3h-15zM798 386h15v3h-15zM799 412h15v4h-15zM799 438h15v4h-15zM799 465h15v3h-15zM799 491h15v3h-15zM799 517h15v3h-15zM799 543h15v3h-15zM799 569h15v3h-15zM799 595h15v3h-15zM800 620.500h15v4h-15z"/></g>
            <g fill="#cf0202"><path d="M552 357h526v4.500H552z"/><path d="M549.500 358h3v16h-3zM575 361h3v13h-3zM601 361h3.500v13H601zM627 361h3.500v13H627zM653 361h4v13h-4zM679 361h4v13h-4zM706 361h3.500v13H706zM732 361h3.500v13H732zM758 361h3v13h-3zM784.500 361h2.500v14h-2.500zM841 361h3.500v14H841zM867.500 361h4v13h-4zM894 361h3.500v13H894zM920 361h3v13h-3zM946 361h3v13h-3zM972 361h3v13h-3zM998.500 361h2v13h-2zM1024.500 361h2v13h-2zM1050.500 361h3v13h-3zM1077 358h3v16h-3z"/></g>
            <rect x="553" y="98" width="522" height="522" fill="none" stroke="#ee9136" stroke-width="2"/>
            <circle cx="814.300" cy="359" r="2" fill="#f58f2c"/>
            <g fill="#cfcb00"><rect x="789" y="90" width="3" height="19"/><rect x="790.500" y="613" width="3" height="19"/><rect x="777" y="623.500" width="8" height="3"/><rect x="546.500" y="380" width="3" height="19"/><rect x="534" y="391" width="7" height="3"/><rect x="1076" y="380" width="2.500" height="19"/></g>
            <g class="ruler"><text x="755" y="239">0.5</text><text x="657" y="398">-0.5</text><text x="929" y="398">0.5</text><text x="755" y="500">-0.5</text></g>
          </svg>
          <div class="hdr2">
            <div class="dd mode"><svg class="i16"><use href="#objmode"/></svg><select aria-label="Mode"><option>Object Mode</option></select><svg class="chev"><use href="#chev"/></svg></div>
            <div class="vmenus"><button>View</button><button>Select</button><button>Add</button><button>Object</button></div>
            <i class="sp"></i>
            <button class="edbtn visb" aria-label="Visibility"><svg class="i16"><use href="#vis"/></svg><svg class="chev"><use href="#chev"/></svg></button>
            <div class="seg pair"><button class="on" aria-label="Gizmos"><svg class="i16"><use href="#gizmo"/></svg></button><button class="dark" aria-label="Gizmo options"><svg class="chev"><use href="#chev"/></svg></button></div>
            <div class="seg pair"><button class="on" aria-label="Overlays"><svg class="i16"><use href="#overlay"/></svg></button><button class="dark" aria-label="Overlay options"><svg class="chev"><use href="#chev"/></svg></button></div>
            <div class="seg xr"><button class="ondim" aria-label="X-ray"><svg class="i16"><use href="#xray"/></svg></button></div>
            <div class="seg shade"><button aria-label="Wireframe"><svg class="i16"><use href="#wire"/></svg></button><button aria-label="Solid"><svg class="i16"><use href="#solid"/></svg></button><button class="on" aria-label="Material preview"><svg class="i16"><use href="#matprev"/></svg></button><button aria-label="Rendered"><svg class="i16"><use href="#render"/></svg></button><button class="dark" aria-label="Shading options"><svg class="chev"><use href="#chev"/></svg></button></div>
          </div>
          <div class="stagebody">
            <div class="shelf">
              <div class="tg"><button class="on more" aria-label="Select box"><svg><use href="#t-box"/></svg></button><button aria-label="Cursor"><svg><use href="#t-cursor"/></svg></button></div>
              <div class="tg"><button aria-label="Move"><svg><use href="#t-move"/></svg></button><button aria-label="Rotate"><svg><use href="#t-rotate"/></svg></button><button class="more" aria-label="Scale"><svg><use href="#t-scale"/></svg></button><button aria-label="Transform"><svg><use href="#t-transform"/></svg></button></div>
              <div class="tg"><button class="more" aria-label="Annotate"><svg><use href="#t-annot"/></svg></button><button aria-label="Measure"><svg><use href="#t-measure"/></svg></button></div>
              <div class="tg"><button class="more" aria-label="Add cube"><svg><use href="#t-cube"/></svg></button></div>
            </div>
            <div class="vinfo"><p>Top Orthographic</p><p>(1) Collection | Plane</p><p>10 Centimeters</p></div>
            <i class="sp"></i>
            <div class="navcol">
              <svg class="axisgizmo" viewBox="0 0 84 84"><path d="M10 42h64" stroke="#cf3650" stroke-width="2"/><path d="M42 10v64" stroke="#78b31b" stroke-width="2"/><circle cx="10" cy="42" r="7.500" fill="#6b3a42" stroke="#cf3650"/><circle cx="42" cy="74" r="7.500" fill="#526a2b" stroke="#78b31b"/><circle cx="74" cy="42" r="8" fill="#cf3650"/><circle cx="42" cy="10" r="8" fill="#78b31b"/><circle cx="42" cy="42" r="9" fill="#2d8cfb"/><g class="axl"><text x="74" y="46">X</text><text x="42" y="14">Y</text><text x="42" y="46">Z</text></g></svg>
              <div class="navbtns"><button aria-label="Zoom"><svg class="i16"><use href="#zoomin"/></svg></button><button aria-label="Pan"><svg class="i16"><use href="#hand"/></svg></button><button aria-label="Camera view"><svg class="i16"><use href="#cine"/></svg></button><button aria-label="Orthographic"><svg class="i16"><use href="#ortho"/></svg></button></div>
            </div>
            <aside class="npanel">
              <div class="np view">
                <label class="frow"><span>Focal Length</span><input class="num" value="50 mm"></label>
                <div class="fgroup"><label class="frow"><span>Clip Start</span><input class="num" value="0.01 m"></label><label class="frow"><span>End</span><input class="num" value="1000 m"></label></div>
                <div class="frow camrow"><span>Local Camera</span><div class="inrow"><input type="checkbox" aria-label="Local Camera"><div class="txt dimmed"><svg class="i16"><use href="#objmode"/></svg><i class="sp"></i><svg class="i16"><use href="#dropper"/></svg></div></div></div>
                <div class="frow rr"><span></span><label class="chk"><input type="checkbox">Render Region</label></div>
                <div class="subhead"><svg class="tri"><use href="#down"/></svg>View Lock</div>
              </div>
              <div class="np lockbox">
                <div class="frow"><span>Lock to Obj...</span><div class="txt"><svg class="i16"><use href="#objmode"/></svg><i class="sp"></i><svg class="i16"><use href="#dropper"/></svg></div></div>
                <div class="frow l1"><span>Lock</span><label class="chk"><input type="checkbox">To 3D Cursor</label></div>
                <div class="frow l2"><span></span><label class="chk"><input type="checkbox">Camera to View</label></div>
              </div>
              <div class="phead"><svg class="tri"><use href="#down"/></svg>3D Cursor<svg class="grip"><use href="#grip"/></svg></div>
              <div class="np cursorbox">
                <p>Location:</p>
                <div class="vec"><label>X<input value="-3.681 m"></label><label>Y<input value="-0.7378 m"></label><label>Z<input value="-0.00006 m"></label></div>
                <p>Rotation:</p>
                <div class="vec"><label>X<input value="0°"></label><label>Y<input value="0°"></label><label>Z<input value="0°"></label></div>
                <div class="dd euler"><select aria-label="Rotation mode"><option>XYZ Euler</option></select><svg class="chev"><use href="#chev"/></svg></div>
              </div>
              <div class="rest">
                <div class="phead"><svg class="tri"><use href="#right"/></svg>Collections<svg class="grip"><use href="#grip"/></svg></div>
                <div class="phead"><svg class="tri"><use href="#right"/></svg>Annotations<svg class="grip"><use href="#grip"/></svg></div>
              </div>
            </aside>
            <div class="ntabs v"><button class="h36">Item</button><button class="h34">Tool</button><button class="h39 on">View</button></div>
          </div>
        </div>
      </section>

      <section class="editor nodeed">
        <div class="hdr light">
          <button class="edbtn" aria-label="Editor type"><svg class="i16"><use href="#shaderball"/></svg><svg class="chev"><use href="#chev"/></svg></button>
          <div class="dd objdd"><svg class="i16"><use href="#objmode"/></svg><select aria-label="Shader type"><option>Object</option></select><svg class="chev"><use href="#chev"/></svg></div>
          <div class="plain"><button>View</button><button>Select</button><button>Add</button><button>Node</button></div>
          <label class="chk usenodes"><input type="checkbox" checked>Use Nodes</label>
          <i class="sp sp-c"></i>
          <div class="dd slot"><select aria-label="Slot"><option>Slot 1</option></select><svg class="chev"><use href="#chev"/></svg></div>
          <div class="idblock matid">
            <button class="idtype" aria-label="Material menu"><svg class="i16"><use href="#matball"/></svg><svg class="chev"><use href="#chev"/></svg></button>
            <input aria-label="Material" value="Material.001">
            <button class="lite faint" aria-label="Fake user"><svg class="i16"><use href="#shield"/></svg></button><button class="lite" aria-label="New material"><svg class="i16"><use href="#copy"/></svg></button><button class="lite" aria-label="Unlink"><svg class="i14"><use href="#cross"/></svg></button>
          </div>
          <svg class="i16 pinb"><use href="#pin"/></svg>
          <i class="sp sp-d"></i>
          <div class="seg one dimseg"><button aria-label="Parent tree"><svg class="i16"><use href="#parent"/></svg></button></div>
          <div class="seg snap"><button aria-label="Snap"><svg class="i16"><use href="#magnet"/></svg></button><button class="dark" aria-label="Snap to"><svg class="i16"><use href="#snapgrid"/></svg><svg class="chev"><use href="#chev"/></svg></button></div>
        </div>
        <div class="nodebody">
          <div class="canvas">
            <svg class="links">
              <defs>
                <pattern id="nsmall" x="41" y="45" width="12.260" height="12.260" patternUnits="userSpaceOnUse"><path d="M0 0h12.260M0 0v12.260" stroke="#181818" stroke-width="2"/></pattern>
                <pattern id="nbig" x="41" y="45.500" width="61.300" height="61.300" patternUnits="userSpaceOnUse"><path d="M0 0h61.300M0 0v61.300" stroke="#111" stroke-width="2"/></pattern>
              </defs>
              <rect width="100%" height="100%" fill="#232323"/><rect width="100%" height="100%" fill="url(#nsmall)"/><rect width="100%" height="100%" fill="url(#nbig)"/>
              <g transform="translate(-1 -662)" stroke-width="2.500" fill="none">
                <path d="M416 850 467 851.700M553 823l49 24M1019 813l65 12" stroke="#f0f0f0"/>
                <path d="m553 810 44.500-75" stroke="#b8b8b8"/><path d="M597.500 735H756" stroke="#8f8f8f" stroke-width="3"/>
                <path d="m688 798 68-50" stroke="#c4c4c4"/><path d="m841 686 91.500 142" stroke="#acacac"/>
              </g>
            </svg>
            <article class="node n-tex sel">
              <h4 class="red"><svg><use href="#down"/></svg>Texture Coordinate</h4>
              <div class="outs o7"><p class="out vec3">Generated</p><p class="out vec3">Normal</p><p class="out vec3">UV</p><p class="out vec3">Object</p><p class="out vec3">Camera</p><p class="out vec3">Window</p><p class="out vec3">Reflection</p></div>
              <div class="nrow m5"><span>Object:</span><div class="ntxt"><svg><use href="#objmode"/></svg><i class="sp"></i><svg><use href="#dropper"/></svg></div></div>
              <label class="nrow top4"><input type="checkbox">From Instancer</label>
            </article>
            <article class="node n-sep sel">
              <h4 class="blue"><svg><use href="#down"/></svg>Separate XYZ</h4>
              <div class="outs o3"><p class="out">X</p><p class="out">Y</p><p class="out">Z</p></div>
              <p class="in vec3 top2">Vector</p>
            </article>
            <i class="reroute"></i>
            <article class="node n-map sel">
              <h4 class="blue"><svg><use href="#down"/></svg>Map Range</h4>
              <p class="out top3">Result</p>
              <div class="nsel"><select aria-label="Interpolation"><option>Linear</option></select><svg><use href="#chev"/></svg></div>
              <label class="nrow m5"><input type="checkbox" checked>Clamp</label>
              <p class="in top4">Value</p>
              <div class="nvals"><label class="in nval"><span>From Min</span><input value="0.400"></label><label class="in nval"><span>From Max</span><input value="0.500"></label><label class="in nval"><span>To Min</span><input value="0.500"></label><label class="in nval"><span>To Max</span><input value="0.400"></label></div>
            </article>
            <article class="node n-sub">
              <h4 class="blue"><svg><use href="#down"/></svg>Subtract</h4>
              <p class="out top3">Value</p>
              <div class="nsel"><select aria-label="Operation"><option>Subtract</option></select><svg><use href="#chev"/></svg></div>
              <label class="nrow m5"><input type="checkbox">Clamp</label>
              <p class="in top4">Value</p><p class="in">Value</p>
            </article>
            <article class="node n-emi sel">
              <h4 class="green"><svg><use href="#down"/></svg>Emission</h4>
              <p class="out shd top3">Emission</p>
              <p class="in col top2">Color</p>
              <label class="in nval"><span>Strength</span><input value="1.000"></label>
            </article>
            <article class="node n-out act">
              <h4 class="dred"><svg><use href="#down"/></svg>Material Output</h4>
              <div class="nsel close"><select aria-label="Target"><option>All</option></select><svg><use href="#chev"/></svg></div>
              <div class="outs o3"><p class="in shd">Surface</p><p class="in shd">Volume</p><p class="in vec3">Displacement</p></div>
            </article>
            <svg class="pointer" viewBox="0 0 68 68"><circle cx="34" cy="34" r="31.500" fill="none" stroke="#f00" stroke-width="3"/><path d="M34.500 35v16l3.700-3.500 2.500 6 2.500-1-2.500-5.800 4.800-.3z" fill="#fff" stroke="#222" stroke-width=".6"/></svg>
            <span class="matname">Material.001</span>
            <button class="flap" aria-label="Show tools">&#x203A;</button>
            <div class="nscroll"></div>
          </div>
          <aside class="npanel">
            <div class="phead"><svg class="tri"><use href="#down"/></svg>Node<svg class="grip"><use href="#grip"/></svg></div>
            <div class="np nodebox">
              <div class="nf"><label for="nname">Name:</label><div class="txt"><svg class="i16"><use href="#nodeico"/></svg><input id="nname" value="Material Output"></div></div>
              <div class="nf"><label for="nlabel">Label:</label><div class="txt"><svg class="i16"><use href="#nodeico"/></svg><input id="nlabel" value=""></div></div>
              <div class="colrow"><svg class="tri"><use href="#right"/></svg><label class="chk"><input type="checkbox">Color</label><i class="sp"></i><svg class="i16"><use href="#list"/></svg></div>
            </div>
            <div class="rest"><div class="phead"><svg class="tri"><use href="#right"/></svg>Properties<svg class="grip"><use href="#grip"/></svg></div></div>
          </aside>
          <div class="ntabs"><button class="h36 on cut">Ite</button><button class="h34 cut">Too</button><button class="h39 cut">Vie</button><button class="h51">Option</button><button class="h88">Node Wrangle</button></div>
        </div>
      </section>

      <section class="editor timeline">
        <div class="hdr">
          <button class="edbtn" aria-label="Editor type"><svg class="i16"><use href="#clock"/></svg><svg class="chev"><use href="#chev"/></svg></button>
          <div class="btnpair"><button>Playback <svg class="chev"><use href="#chev"/></svg></button><button>Keying <svg class="chev"><use href="#chev"/></svg></button></div>
          <div class="plain"><button>View</button><button>Marker</button></div>
          <i class="sp sp-e"></i>
          <div class="seg reco"><button aria-label="Auto keying"><svg class="i16"><use href="#rec"/></svg></button><button class="dark dim" aria-label="Keying options"><svg class="chev"><use href="#chev"/></svg></button></div>
          <div class="seg transport"><button aria-label="First"><svg class="i16"><use href="#first"/></svg></button><button aria-label="Previous key"><svg class="i16"><use href="#prevk"/></svg></button><button aria-label="Play reverse"><svg class="i16"><use href="#prev"/></svg></button><button aria-label="Play"><svg class="i16"><use href="#play"/></svg></button><button aria-label="Next key"><svg class="i16"><use href="#nextk"/></svg></button><button aria-label="Last"><svg class="i16"><use href="#last"/></svg></button></div>
          <i class="sp sp-f"></i>
          <input class="num frame" aria-label="Current frame" value="1">
          <div class="range"><button aria-label="Preview range"><svg class="i16"><use href="#stop"/></svg></button><label>Start<input value="1"></label><label>End<input value="250"></label></div>
        </div>
        <div class="tbody">
          <div class="nums"><span>10</span><span>20</span><span>30</span><span>40</span><span>50</span><span>60</span><span>70</span><span>80</span><span>90</span><span>100</span><span>110</span><span>120</span><span>130</span><span>140</span><span>150</span><span>160</span><span>170</span><span>180</span><span>190</span><span>200</span><span>210</span><span>220</span><span>230</span><span>240</span><span>250</span></div>
          <div class="track"><i class="before"></i><div class="cells"><i></i><i></i><i></i><i></i><i></i><i></i><i></i><i></i><i></i><i></i><i></i><i></i><i></i><i></i><i></i><i></i><i></i><i></i><i></i><i></i><i></i><i></i><i></i><i></i><i class="end"></i></div></div>
          <div class="tscroll"><i></i><i></i></div>
          <div class="playhead"><span>1</span></div>
          <button class="flap tl" aria-label="Show channels">&#x203A;</button>
          <button class="flap tr" aria-label="Show sidebar">&#x2039;</button>
        </div>
      </section>
    </div>

    <div class="rightcol">
      <section class="editor outliner">
        <div class="hdr">
          <button class="edbtn" aria-label="Editor type"><svg class="i16"><use href="#tree"/></svg><svg class="chev"><use href="#chev"/></svg></button>
          <button class="edbtn" aria-label="Display mode"><svg class="i16"><use href="#vlayer"/></svg><svg class="chev"><use href="#chev"/></svg></button>
          <div class="txt osearch"><svg class="i16"><use href="#search"/></svg><input aria-label="Filter outliner"></div>
          <i class="sp"></i>
          <button class="edbtn" aria-label="Filter"><svg class="i16"><use href="#funnel"/></svg><svg class="chev"><use href="#chev"/></svg></button>
          <div class="seg one"><button aria-label="New collection"><svg class="i16"><use href="#newcol"/></svg></button></div>
        </div>
        <div class="rows">
          <div class="orow r0"><svg class="i16"><use href="#box"/></svg><span>Scene Collection</span></div>
          <div class="orow r1"><svg class="tri"><use href="#down"/></svg><svg class="i18 boxed"><use href="#box"/></svg><span>Collection</span><i class="sp"></i><input type="checkbox" checked class="white" aria-label="Enable collection"><svg class="i14 eye"><use href="#eye"/></svg><svg class="i14"><use href="#cam"/></svg></div>
          <div class="orow r2"><svg class="tri"><use href="#right"/></svg><svg class="i16 or"><use href="#gp"/></svg><span>GPencil</span><svg class="i14 gr far"><use href="#gpd"/></svg><i class="sp"></i><svg class="i14 eye"><use href="#eye"/></svg><svg class="i14"><use href="#cam"/></svg></div>
          <div class="orow r2 selrow"><svg class="tri"><use href="#right"/></svg><svg class="i16 or hot"><use href="#meshobj"/></svg><span>Plane</span><svg class="i14 gr far"><use href="#mesh"/></svg><i class="sp"></i><svg class="i14 eye"><use href="#eye"/></svg><svg class="i14"><use href="#cam"/></svg></div>
          <div class="orow r2"><svg class="tri"><use href="#right"/></svg><b class="aico">a</b><span>Text</span><svg class="i14 gr far"><use href="#curve"/></svg><i class="sp"></i><svg class="i14 eye"><use href="#eye"/></svg><svg class="i14"><use href="#cam"/></svg></div>
          <div class="orow r2"><svg class="tri"><use href="#right"/></svg><b class="aico">a</b><span>Text.001</span><svg class="i14 gr far"><use href="#curve"/></svg><i class="sp"></i><svg class="i14 eye"><use href="#eye"/></svg><svg class="i14"><use href="#cam"/></svg></div>
        </div>
      </section>

      <section class="editor props">
        <div class="hdr">
          <button class="edbtn" aria-label="Editor type"><svg class="i16"><use href="#switches"/></svg><svg class="chev"><use href="#chev"/></svg></button>
          <i class="sp sp-g"></i>
          <div class="txt psearch"><svg class="i16"><use href="#search"/></svg><input aria-label="Search properties"></div>
          <i class="sp sp-h"></i>
          <button class="edbtn sq" aria-label="Options"><svg class="chev"><use href="#chev"/></svg></button>
        </div>
        <div class="pbody">
          <nav class="ptabs">
            <button class="last-in" aria-label="Tool"><svg class="i14"><use href="#tools"/></svg></button>
            <button aria-label="Render"><svg class="i14"><use href="#rendercam"/></svg></button><button aria-label="Output"><svg class="i14"><use href="#printer"/></svg></button><button aria-label="View layer"><svg class="i14"><use href="#vlayer"/></svg></button><button aria-label="Scene"><svg class="i14"><use href="#scene"/></svg></button><button class="last-in pk" aria-label="World"><svg class="i14"><use href="#world"/></svg></button>
            <button class="or" aria-label="Object"><svg class="i14"><use href="#objmode"/></svg></button><button class="bl" aria-label="Modifiers"><svg class="i14"><use href="#wrench"/></svg></button><button class="bl" aria-label="Particles"><svg class="i14"><use href="#particles"/></svg></button><button class="bl" aria-label="Physics"><svg class="i14"><use href="#physics"/></svg></button><button class="bl" aria-label="Constraints"><svg class="i14"><use href="#constraint"/></svg></button><button class="gr on" aria-label="Object data"><svg class="i14"><use href="#mesh"/></svg></button><button class="last-in pk" aria-label="Material"><svg class="i14"><use href="#matball"/></svg></button>
            <button class="pk" aria-label="Texture"><svg class="i14"><use href="#texture"/></svg></button>
          </nav>
          <div class="pcontent">
            <div class="crumb"><svg class="i16"><use href="#objmode"/></svg><span>Plane</span><svg class="tri dk"><use href="#right"/></svg><svg class="i16"><use href="#mesh"/></svg><span>Plane</span><i class="sp"></i><svg class="i16 fade"><use href="#pin"/></svg></div>
            <div class="idblock pid"><button class="idtype" aria-label="Mesh menu"><svg class="i16"><use href="#mesh"/></svg><svg class="chev"><use href="#chev"/></svg></button><input aria-label="Mesh name" value="Plane"><button class="lite faint" aria-label="Fake user"><svg class="i16"><use href="#shield"/></svg></button></div>
            <div class="phead"><svg class="tri"><use href="#down"/></svg>Vertex Groups<svg class="grip"><use href="#grip"/></svg></div>
            <div class="listbox"><div class="list"><svg class="tri"><use href="#right"/></svg><svg class="grip"><use href="#grip"/></svg></div><div class="lbtns"><div class="pm"><button aria-label="Add"><svg class="i14"><use href="#plus"/></svg></button><button class="dim" aria-label="Remove"><svg class="i14"><use href="#minus"/></svg></button></div><button class="edbtn sq" aria-label="More"><svg class="chev"><use href="#chev"/></svg></button></div></div>
            <div class="phead"><svg class="tri"><use href="#down"/></svg>Shape Keys<svg class="grip"><use href="#grip"/></svg></div>
            <div class="listbox"><div class="list"><svg class="tri"><use href="#right"/></svg><svg class="grip"><use href="#grip"/></svg></div><div class="lbtns"><div class="pm"><button aria-label="Add"><svg class="i14"><use href="#plus"/></svg></button><button class="dim" aria-label="Remove"><svg class="i14"><use href="#minus"/></svg></button></div><button class="edbtn sq" aria-label="More"><svg class="chev"><use href="#chev"/></svg></button></div></div>
            <div class="phead"><svg class="tri"><use href="#right"/></svg>UV Maps<svg class="grip"><use href="#grip"/></svg></div>
            <div class="phead"><svg class="tri"><use href="#right"/></svg>Vertex Colors<svg class="grip"><use href="#grip"/></svg></div>
            <div class="phead"><svg class="tri"><use href="#right"/></svg>Face Maps<svg class="grip"><use href="#grip"/></svg></div>
            <div class="phead"><svg class="tri"><use href="#right"/></svg>Normals<svg class="grip"><use href="#grip"/></svg></div>
            <div class="phead"><svg class="tri"><use href="#right"/></svg>Texture Space<svg class="grip"><use href="#grip"/></svg></div>
            <div class="phead"><svg class="tri"><use href="#right"/></svg>Remesh<svg class="grip"><use href="#grip"/></svg></div>
            <div class="phead"><svg class="tri"><use href="#right"/></svg>Geometry Data<svg class="grip"><use href="#grip"/></svg></div>
            <div class="phead"><svg class="tri"><use href="#right"/></svg>Custom Properties<svg class="grip"><use href="#grip"/></svg></div>
          </div>
        </div>
      </section>
    </div>
  </main>

  <footer class="status">
    <span class="st w66"><svg class="i16"><use href="#mouseL"/></svg>Select</span>
    <span class="st w172"><svg class="i16"><use href="#mouseLd"/></svg>Box Select</span>
    <span class="st w236"><svg class="i16"><use href="#mouseM"/></svg>Zoom 2D View</span>
    <span class="st w263"><svg class="i16"><use href="#mouseRd"/></svg>Cut Links</span>
    <span class="report"><span class="ri"><svg class="i14"><use href="#info"/></svg></span>Saved "XGradientProtrusion_SpikeyxxxCGCookie_15March2021_5.blend"</span>
    <i class="sp"></i>
    <span class="ver">2.93.0 Alpha</span>
  </footer>
</div>
</body>
</html>
```
FILE: styles.css
```css
* { box-sizing: border-box; }
body { margin: 0; background: #1d1d1d; color: #dedede; font: 11px/16px "DejaVu Sans Condensed", "DejaVu Sans", sans-serif; }
button, input, select { font: inherit; color: inherit; margin: 0; padding: 0; border: 0; background: none; border-radius: 0; min-width: 0; outline: 0; }
button { display: flex; align-items: center; justify-content: center; white-space: nowrap; }
select { appearance: none; flex: 1; }
p, h4 { margin: 0; font-weight: normal; }
svg { display: block; flex: none; }
.defs { position: absolute; width: 0; height: 0; }
.i12 { width: 12px; height: 12px; }
.i14 { width: 14px; height: 14px; }
.i16 { width: 16px; height: 16px; }
.i18 { width: 18px; height: 18px; }
.chev { width: 9px; height: 9px; }
.tri { width: 8px; height: 8px; color: #b8b8b8; }
.grip { width: 12px; height: 6px; color: #a0a0a0; }
.sp { flex: 1; }

.app { display: flex; flex-direction: column; min-height: 100vh; }

.titlebar { height: 23px; background: #fff; color: #000; display: flex; align-items: center; padding: 0 19px 0 2px; font: 12px/16px Roboto, sans-serif; }
.title-logo { margin-right: 5px; }
.title-text { flex: 1; white-space: nowrap; overflow: hidden; }
.winctl { display: flex; gap: 33px; padding-bottom: 3px; }

.topbar { height: 27px; background: #232323; display: flex; align-items: center; padding: 0 9px 0 9px; }
.menus { display: flex; padding-left: 10px; gap: 17px; width: 230px; }
.wtabs { display: flex; gap: 2px; align-self: flex-end; padding-bottom: 2px; flex: 1; }
.wtabs button { height: 20px; padding: 2px 9px 0; background: #2b2b2b; color: #989898; border-radius: 3px 3px 0 0; }
.wtabs .on { background: #424242; color: #fff; }
.wtabs .add { padding: 0 3px; }

.idblock { display: flex; height: 20px; border: 1px solid #3d3d3d; border-radius: 4px; overflow: hidden; background: #1d1d1d; }
.top-id { width: 191px; margin-left: 6px; }
.idblock input { flex: 1; padding: 0 7px; }
.idtype { width: 31px; gap: 2px; background: #2b2b2b; border-right: 1px solid #3d3d3d; }
.lite { width: 20px; background: #545454; border-right: 1px solid #3d3d3d; }
.idblock .lite:last-child { border-right: 0; }
.off { width: 20px; background: #2b2b2b; color: #5a5a5a; }
.faint { color: #959595; }

.work { flex: 1; display: grid; grid-template-columns: minmax(0, 1fr) 331px; gap: 3px; padding: 0 1px 2px; }
.leftcol { display: grid; grid-template-rows: minmax(584px, 1fr) 307px 72px; gap: 3px; min-width: 0; }
.rightcol { display: grid; grid-template-rows: 310px minmax(656px, 1fr); gap: 3px; }
.editor { border-radius: 6px; overflow: hidden; display: flex; flex-direction: column; min-width: 0; }
.hdr { height: 25px; flex: none; background: #383838; display: flex; align-items: center; padding: 1px 6px 0 8px; }
.light { background: #424242; padding-right: 8px; }
.edbtn { width: 32px; height: 19px; gap: 2px; background: #2b2b2b; border: 1px solid #404040; border-radius: 4px; }
.btn { height: 19px; background: #2b2b2b; border: 1px solid #404040; border-radius: 4px; }
.dd { display: flex; align-items: center; height: 19px; padding: 0 3px; gap: 6px; background: #2b2b2b; border: 1px solid #404040; border-radius: 4px; }
.seg { display: flex; height: 19px; border-radius: 4px; overflow: hidden; border: 1px solid #404040; background: #404040; gap: 1px; }
.seg button { flex: 1; background: #5c5c5c; color: #c8c8c8; }
.seg .on { background: #4f76b3; color: #fff; }
.seg .ondim { background: #3b4f73; color: #5f7fb5; }
.seg .dark { background: #2b2b2b; color: #dedede; gap: 3px; }
.dim { opacity: .4; }

.toolpick { width: 22px; height: 22px; margin: 0 15px 0 12px; border: 1px dashed #f5ab35; }
.selmodes { width: 95px; }
.sp-a { flex: 487 0 0; }
.sp-b { flex: 617 0 0; }
.w80 { width: 80px; margin-right: 5px; }
.pivot { margin-right: 6px; }
.snap { width: 52px; margin-right: 5px; }
.snap button:first-child { flex: 0 0 18px; }
.opts { width: 62px; gap: 5px; }

.stage { flex: 1; position: relative; display: flex; flex-direction: column; }
.scene { position: absolute; left: 0; top: 0; width: 100%; height: 100%; }
.ruler { font: 600 22px "Open Sans", sans-serif; fill: #cfcb00; }
.hdr2 { position: relative; height: 25px; display: flex; align-items: center; padding: 1px 7px 0 9px; background: rgba(80, 80, 80, .15); }
.mode { width: 109px; margin-right: 6px; }
.vmenus { display: flex; gap: 3px; }
.vmenus button { height: 19px; padding: 0 7px; background: #303030; border-radius: 3px; }
.visb { margin-right: 6px; }
.pair { width: 38px; margin-right: 7px; }
.pair .on { flex: 0 0 18px; }
.xr { width: 20px; margin-right: 6px; }
.shade { width: 95px; }

.stagebody { position: relative; flex: 1; display: flex; }
.shelf { width: 40px; margin: 10px 0 0 8px; display: flex; flex-direction: column; gap: 6px; }
.tg { display: flex; flex-direction: column; gap: 1px; border-radius: 4px; overflow: hidden; }
.shelf button { width: 40px; height: 34px; background: #303030; position: relative; }
.shelf svg { width: 32px; height: 32px; }
.shelf .on { background: #557fc3; }
.shelf .more::after { content: ""; position: absolute; right: 2px; bottom: 2px; border: 2px solid #9a9a9a; border-top-color: transparent; border-left-color: transparent; }
.vinfo { padding: 9px 0 0 18px; color: #fff; line-height: 18px; text-shadow: 0 1px 2px #000; }
.navcol { width: 92px; padding-top: 9px; }
.axisgizmo { width: 84px; height: 84px; margin-bottom: -1px; }
.axl { font: bold 10px "DejaVu Sans", sans-serif; text-anchor: middle; fill: #1c2a12; }
.navbtns { display: flex; flex-direction: column; gap: 2px; padding: 0 8px 0 56px; }
.navbtns button { width: 28px; height: 28px; border-radius: 50%; background: #303030; color: #e6e6e6; }

.npanel { width: 199px; display: flex; flex-direction: column; background: #333; }
.np { padding: 0 8px 0 9px; }
.frow { display: grid; grid-template-columns: 1fr 105px; column-gap: 10px; align-items: center; height: 19px; }
.frow > span { text-align: right; white-space: nowrap; }
.num { height: 19px; background: #585858; border-radius: 4px; text-align: center; text-shadow: 0 1px 1px #222; }
.view { padding-top: 2px; height: 168px; }
.fgroup { margin-top: 4px; display: flex; flex-direction: column; gap: 1px; }
.fgroup .num { border-radius: 4px 4px 0 0; }
.fgroup label + label .num { border-radius: 0 0 4px 4px; }
.camrow { margin-top: 17px; }
.inrow { display: flex; align-items: center; gap: 7px; }
.inrow .txt { flex: 1; }
.rr { margin-top: 17px; }
.txt { display: flex; align-items: center; height: 20px; background: #1d1d1d; border: 1px solid #404040; border-radius: 4px; padding: 0 3px; }
.txt input { flex: 1; padding-left: 4px; }
.dimmed { background: #2c2c2c; color: #999; }
input[type=checkbox] { appearance: none; width: 13px; height: 13px; border-radius: 2px; background: #646464; flex: none; }
input[type=checkbox]:checked { background: #4f76b3 url('data:image/svg+xml,<svg xmlns="http://www.w3.org/2000/svg" viewBox="0 0 12 12"><path d="M2.500 6 5 9l4.500-6.500" fill="none" stroke="white" stroke-width="1.600"/></svg>'); }
.orow input.white:checked { width: 10px; height: 10px; margin-right: 4px; background: #e6e6e6 url('data:image/svg+xml,<svg xmlns="http://www.w3.org/2000/svg" viewBox="0 0 12 12"><path d="M2.500 6 5 9l4.500-6.500" fill="none" stroke="black" stroke-width="1.800"/></svg>'); }
.chk { display: flex; align-items: center; gap: 4px; white-space: nowrap; }
.subhead { display: flex; align-items: center; gap: 7px; margin: 10px 0 0 13px; height: 22px; font-size: 12px; color: #e6e6e6; }
.lockbox { background: #262626; padding-top: 8px; height: 81px; }
.l1 { margin-top: 6px; }
.l2 { margin-top: 1px; }
.phead { display: flex; align-items: center; gap: 7px; height: 24px; padding: 0 6px 0 8px; background: #424242; font-size: 12px; color: #e6e6e6; flex: none; }
.phead .grip { margin-left: auto; }
.cursorbox { background: #383838; padding-top: 10px; height: 206px; }
.cursorbox p { height: 16px; margin-bottom: 2px; }
.vec { display: flex; flex-direction: column; gap: 1px; border-radius: 4px; overflow: hidden; }
.vec label { display: flex; align-items: center; height: 19px; padding: 0 14px; background: #585858; text-shadow: 0 1px 1px #222; }
.vec input { flex: 1; text-align: right; }
.cursorbox .vec + p { margin-top: 8px; }
.euler { margin-top: 6px; }
.rest { flex: 1; background: #424242; }
.ntabs { width: 20px; display: flex; flex-direction: column; gap: 6px; padding: 6px 4px 0 0; background: #232323; }
.v { padding-top: 7px; }
.ntabs button { writing-mode: vertical-rl; transform: rotate(180deg); width: 16px; background: #2b2b2b; border-radius: 3px 0 0 3px; color: #dedede; line-height: 14px; }
.ntabs .on { background: #4a4a4a; }
.h36 { height: 37px; }
.h34 { height: 34px; }
.h39 { height: 39px; }
.h51 { height: 51px; }
.h88 { height: 88px; }
.ntabs .cut { padding-bottom: 5px; }

.objdd { width: 88px; margin: 0 12px 0 6px; }
.plain { display: flex; gap: 16px; }
.usenodes { margin-left: 13px; gap: 5px; color: #fff; }
.sp-c { flex: 247 0 0; }
.sp-d { flex: 562 0 0; }
.slot { width: 78px; padding-left: 6px; margin-right: 7px; }
.matid { width: 211px; margin-right: 8px; }
.pinb { color: #999; }
.one { width: 19px; }
.dimseg { opacity: .6; margin-right: 6px; }
.light .snap { margin-right: 0; }

.nodebody { flex: 1; display: flex; }
.canvas { flex: 1; position: relative; overflow: hidden; min-width: 0; }
.links { position: absolute; left: 0; top: 0; width: 100%; height: 100%; }
.node { position: absolute; width: 86px; border: 1px solid transparent; border-radius: 3px; background: #404040; font-size: 7px; line-height: 12px; color: #dadada; box-shadow: 0 2px 5px rgba(0, 0, 0, .6); }
.sel { border-color: #d5531a; }
.act { border-color: #fff; }
.node h4 { display: flex; align-items: center; gap: 3px; height: 12px; padding-left: 5px; border-radius: 2px 2px 0 0; white-space: nowrap; }
.node h4 svg { width: 6px; height: 6px; }
.red { background: #a83242; }
.dred { background: #7e2833; }
.blue { background: #4488b0; }
.green { background: #45863f; }
.n-tex { left: 329px; top: 125px; height: 145px; }
.n-sep { left: 466px; top: 125px; height: 74px; }
.n-map { left: 601px; top: 113px; height: 135px; }
.n-sub { left: 754px; top: 1px; height: 95px; }
.n-emi { left: 932px; top: 128px; height: 60px; }
.n-out { left: 1082px; top: 125px; height: 74px; }
.reroute { position: absolute; left: 594px; top: 71px; width: 4px; height: 4px; border-radius: 50%; background: #aaa; }
.outs { display: grid; margin-top: 3px; align-items: center; }
.o7 { height: 94px; }
.o3 { height: 40px; }
.out, .in { position: relative; height: 13px; padding: 0 7px 0 6px; line-height: 13px; white-space: nowrap; }
.out { text-align: right; }
.out::after, .in::after { content: ""; position: absolute; right: -3px; top: 4px; width: 5px; height: 5px; border-radius: 50%; background: #a1a1a1; }
.in::after { right: auto; left: -3px; }
.vec3::after { background: #6363c7; }
.shd::after { background: #63c763; }
.col::after { background: #c7c729; }
.nrow { display: flex; align-items: center; gap: 3px; height: 11px; margin: 0 6px; white-space: nowrap; }
.nrow input[type=checkbox] { width: 9px; height: 9px; border-radius: 1px; }
.ntxt { flex: 1; display: flex; align-items: center; height: 11px; padding: 0 1px; background: #1d1d1d; border-radius: 2px; }
.ntxt svg { width: 9px; height: 9px; }
.m5 { margin-top: 5px; }
.top2 { margin-top: 2px; }
.top3 { margin-top: 3px; }
.top4 { margin-top: 4px; }
.nsel { display: flex; align-items: center; height: 11px; margin: 5px 6px 0; padding: 0 3px; background: #2b2b2b; border-radius: 2px; }
.nsel svg { width: 6px; height: 6px; }
.close { margin-top: 4px; }
.nvals { display: grid; height: 53px; align-items: center; }
.nval { display: flex; align-items: center; height: 11px; padding: 0 6px; }
.nval span { padding-left: 8px; height: 11px; line-height: 11px; background: #585858; border-radius: 2px 0 0 2px; }
.nval input { flex: 1; width: 0; height: 11px; padding-right: 9px; text-align: right; background: #585858; border-radius: 0 2px 2px 0; }
.nval::after { top: 3px; }
.n-emi .nval { margin-top: 2px; }
.pointer { position: absolute; left: 681px; top: 167px; width: 68px; height: 68px; }
.matname { position: absolute; left: 29px; bottom: 25px; color: #fff; }
.nscroll { position: absolute; left: 8px; right: 9px; bottom: 2px; height: 6px; border-radius: 3px; background: rgba(80, 80, 80, .6); }
.flap { position: absolute; left: 0; top: 14px; width: 7px; height: 14px; background: #333; border-radius: 0 4px 4px 0; font-size: 16px; line-height: 12px; color: #bbb; }
.nodebox { background: #383838; height: 85px; padding-top: 8px; }
.nf { display: grid; grid-template-columns: 1fr 137px; align-items: center; margin-bottom: 5px; }
.nf .txt { overflow: hidden; }
.nf .txt input { width: 90px; }
.colrow { display: flex; align-items: center; gap: 6px; margin-top: 12px; padding: 0 19px 0 12px; }

.btnpair { display: flex; gap: 1px; height: 19px; margin: 0 9px 0 5px; border: 1px solid #404040; border-radius: 4px; overflow: hidden; background: #404040; }
.btnpair button { padding: 0 2px 0 6px; gap: 7px; background: #2b2b2b; }
.sp-e { flex: 442 0 0; }
.sp-f { flex: 442 0 0; }
.reco { width: 39px; margin-right: 6px; }
.transport { width: 121px; }
.transport button, .reco button { color: #e6e6e6; }
.frame { width: 74px; margin-right: 7px; }
.range { display: flex; gap: 1px; width: 190px; height: 19px; border-radius: 4px; overflow: hidden; }
.range button { width: 18px; background: #585858; }
.range label { flex: 1; display: flex; padding: 0 14px 0 15px; background: #585858; align-items: center; }
.range input { flex: 1; width: 0; text-align: right; }
.tbody { flex: 1; position: relative; background: #2b2b2b; display: flex; flex-direction: column; }
.nums { display: grid; grid-template-columns: repeat(25, 1fr); height: 22px; padding: 0 30px 0 80px; text-align: center; line-height: 24px; color: #a8a8a8; }
.track { flex: 1; display: flex; background: #333; padding-right: 28px; }
.before { width: 82px; background: linear-gradient(90deg, #363636 57px, #424242 57px); }
.cells { flex: 1; display: grid; grid-template-columns: repeat(25, 1fr); }
.cells i { background: linear-gradient(90deg, transparent 29px, #2a2a2a 29px, #2a2a2a 31px, transparent 31px) #424242; border-right: 1px solid #3a3a3a; }
.cells .end { background: linear-gradient(90deg, #424242 29px, #000 29px, #000 31px, #363636 31px); }
.tscroll { height: 11px; display: flex; justify-content: space-between; align-items: center; margin: 0 7px 1px 8px; background: #636363; border-radius: 5px; padding: 0 1px; }
.tscroll i { width: 8px; height: 8px; border-radius: 50%; background: #424242; border: 1px solid #808080; }
.playhead { position: absolute; left: 46px; top: 3px; width: 24px; height: 44px; background: linear-gradient(#557fc3, #557fc3) center / 2px 100% no-repeat; }
.playhead span { display: block; height: 17px; line-height: 18px; text-align: center; background: #557fc3; color: #fff; border-radius: 4px; }
.tl { top: 15px; }
.tr { top: 15px; left: auto; right: 0; border-radius: 4px 0 0 4px; }

.outliner { background: #282828; }
.outliner .edbtn { width: 31px; margin-right: 6px; }
.osearch { width: 112px; margin-left: 16px; }
.rows { flex: 1; padding-top: 1px; background: repeating-linear-gradient(#282828 0 20px, #2d2d2d 20px 40px) 0 1px; }
.orow { height: 20px; display: flex; align-items: center; padding: 1px 10px 0 0; color: #c8c8c8; white-space: nowrap; }
.orow .eye { margin: 0 5px; }
.orow .eye, .orow .eye + svg, .r0 svg, .boxed { color: #dcdcdc; }
.r0 { padding-left: 22px; gap: 6px; }
.r1 { padding-left: 25px; }
.r1 .tri { margin-right: 8px; }
.boxed { padding: 2px; margin-right: 6px; background: #4a4a4a; border-radius: 4px; }
.r2 { padding-left: 46px; }
.r2 .tri { margin-right: 8px; }
.r2 .or, .aico { margin-right: 6px; width: 16px; }
.aico { font: bold 24px/16px "Liberation Serif", serif; color: #ce8448; text-align: center; padding-bottom: 6px; }
.far { margin-left: 24px; }
.selrow { background: #3b5689; }
.selrow span { color: #f2a03d; }
.hot { background: rgba(255, 255, 255, .25); border-radius: 4px; padding: 1px; }
.or { color: #d98d50; }
.gr { color: #1bbf98; }
.bl { color: #6b95d1; }
.pk { color: #cb6970; }

.psearch { width: 111px; }
.sp-g { flex: 72 0 0; }
.sp-h { flex: 84 0 0; }
.props .sq { width: 19px; }
.pbody { flex: 1; display: flex; background: #424242; }
.ptabs { width: 28px; padding: 9px 0 0 2px; background: #232323; display: flex; flex-direction: column; gap: 2px; }
.ptabs button { width: 26px; height: 26px; background: #2c2c2c; border-radius: 4px 0 0 4px; flex: none; }
.ptabs .on { background: #424242; }
.ptabs .last-in { margin-bottom: 8px; }
.pcontent { flex: 1; }
.crumb { display: flex; align-items: center; height: 36px; padding: 0 8px 0 10px; color: #d0d0d0; }
.crumb span { margin-left: 8px; }
.dk { margin: 0 12px 0 10px; color: #2a2a2a; }
.fade { color: #999; }
.pid { margin: 8px 7px 8px 9px; }
.pcontent .phead { color: #c8c8c8; }
.listbox { display: flex; justify-content: space-between; padding: 8px 7px 8px 9px; height: 96px; background: #383838; }
.list { flex: 1; margin-right: 10px; display: grid; grid-template-columns: 54fr auto 46fr; align-items: end; padding: 0 8px 6px 10px; background: #2d2d2d; border: 1px solid #424242; border-radius: 4px; }
.list .grip { color: #e0e0e0; }
.lbtns { width: 19px; }
.pm { border-radius: 4px; overflow: hidden; margin-bottom: 8px; }
.pm button { width: 19px; height: 19px; background: #545454; color: #fff; }
.pm .dim { color: #bbb; opacity: .6; }

.status { height: 19px; background: #303030; display: flex; align-items: center; padding: 0 18px 0 9px; color: #a6a6a6; }
.st { display: flex; align-items: center; gap: 9px; white-space: nowrap; }
.w66 { width: 66px; }
.w172 { width: 172px; }
.w236 { width: 235px; }
.w263 { width: 263px; }
.report { display: flex; align-items: center; height: 17px; padding-right: 20px; gap: 2px; background: #27303f; color: #c8c8c8; border-radius: 4px; overflow: hidden; white-space: nowrap; }
.ri { width: 24px; height: 17px; display: grid; place-items: center; background: #1c3155; }
```
